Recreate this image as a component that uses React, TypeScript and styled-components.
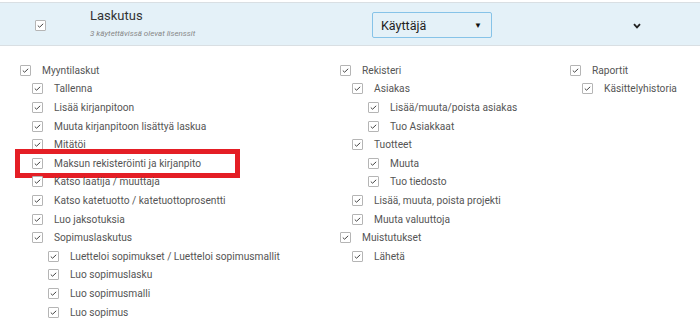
import React from "react";
import styled, { createGlobalStyle } from "styled-components";

const GlobalStyle = createGlobalStyle`
  body {
    margin: 0;
    background: #fff;
    font-family: Roboto, "Liberation Sans", Arial, sans-serif;
  }
`;

type Item = { label: string; level: number; marked?: boolean };

const columns: { width: number; items: Item[] }[] = [
  {
    width: 320,
    items: [
      { label: "Myyntilaskut", level: 0 },
      { label: "Tallenna", level: 1 },
      { label: "Lisää kirjanpitoon", level: 1 },
      { label: "Muuta kirjanpitoon lisättyä laskua", level: 1 },
      { label: "Mitätöi", level: 1 },
      { label: "Maksun rekisteröinti ja kirjanpito", level: 1, marked: true },
      { label: "Katso laatija / muuttaja", level: 1 },
      { label: "Katso katetuotto / katetuottoprosentti", level: 1 },
      { label: "Luo jaksotuksia", level: 1 },
      { label: "Sopimuslaskutus", level: 1 },
      { label: "Luetteloi sopimukset / Luetteloi sopimusmallit", level: 2 },
      { label: "Luo sopimuslasku", level: 2 },
      { label: "Luo sopimusmalli", level: 2 },
      { label: "Luo sopimus", level: 2 },
    ],
  },
  {
    width: 230,
    items: [
      { label: "Rekisteri", level: 0 },
      { label: "Asiakas", level: 1 },
      { label: "Lisää/muuta/poista asiakas", level: 2 },
      { label: "Tuo Asiakkaat", level: 2 },
      { label: "Tuotteet", level: 1 },
      { label: "Muuta", level: 2 },
      { label: "Tuo tiedosto", level: 2 },
      { label: "Lisää, muuta, poista projekti", level: 1 },
      { label: "Muuta valuuttoja", level: 1 },
      { label: "Muistutukset", level: 0 },
      { label: "Lähetä", level: 1 },
    ],
  },
  {
    width: 130,
    items: [
      { label: "Raportit", level: 0 },
      { label: "Käsittelyhistoria", level: 1 },
    ],
  },
];

const indents = [0, 12, 28];

const Check = () => (
  <Box>
    <svg width="7" height="5" viewBox="0 0 7 5">
      <path d="M0.8 2.6 L2.6 4.2 L6.2 0.8" fill="none" stroke="#444" strokeWidth="1" />
    </svg>
  </Box>
);

const App = () => {
  return (
    <Page>
      <GlobalStyle />
      <Header>
        <HeadCheck>
          <Check />
        </HeadCheck>
        <TitleBlock>
          <Title>Laskutus</Title>
          <Sub>3 käytettävissä olevat lisenssit</Sub>
        </TitleBlock>
        <Select>
          <span>Käyttäjä</span>
          <Caret>▼</Caret>
        </Select>
        <Chevron>
          <svg width="8" height="6" viewBox="0 0 8 6">
            <path d="M1 1.2 L4 4.4 L7 1.2" fill="none" stroke="#222" strokeWidth="1.8" />
          </svg>
        </Chevron>
      </Header>
      <Body>
        {columns.map((col, i) => (
          <Column key={i} $width={col.width}>
            {col.items.map((it) => (
              <Row key={it.label} $indent={indents[it.level]} $marked={!!it.marked}>
                <Check />
                <Label>{it.label}</Label>
              </Row>
            ))}
          </Column>
        ))}
      </Body>
    </Page>
  );
};

const Page = styled.div`
  width: 700px;
  height: 331px;
  overflow: hidden;
  padding-top: 2px;
  box-sizing: border-box;
`;

const Header = styled.div`
  height: 42px;
  background: #e4f1f8;
  border-top: 1px solid #d9dfe3;
  border-bottom: 1px solid #d9dfe3;
  display: flex;
  align-items: center;
`;

const HeadCheck = styled.div`
  width: 55px;
  padding-left: 35px;
  display: flex;
  align-items: center;
  margin-top: 3px;
`;

const TitleBlock = styled.div`
  width: 282px;
  display: flex;
  flex-direction: column;
  gap: 5px;
  margin-top: -2px;
`;

const Title = styled.div`
  font-size: 13px;
  color: #333;
  line-height: 16px;
`;

const Sub = styled.div`
  font-size: 8px;
  font-style: italic;
  color: #888;
  line-height: 10px;
`;

const Select = styled.div`
  width: 120px;
  height: 26px;
  box-sizing: border-box;
  border: 1px solid #86c3e8;
  border-radius: 2px;
  display: flex;
  align-items: center;
  justify-content: space-between;
  padding: 0 9px 0 8px;
  font-size: 12.5px;
  color: #222;
  margin-top: 2px;
`;

const Caret = styled.span`
  font-size: 8px;
  color: #111;
`;

const Chevron = styled.div`
  margin-left: 141px;
  display: flex;
  align-items: center;
  margin-top: 3px;
`;

const Body = styled.div`
  display: flex;
  padding: 15px 0 0 20px;
`;

const Column = styled.div<{ $width: number }>`
  width: ${(p) => p.$width}px;
  display: flex;
  flex-direction: column;
`;

const Row = styled.div<{ $indent: number; $marked: boolean }>`
  position: relative;
  height: 18.6px;
  display: flex;
  align-items: center;
  gap: 11px;
  padding-left: ${(p) => p.$indent}px;
  ${(p) =>
    p.$marked &&
    `
    &::after {
      content: "";
      position: absolute;
      left: -5px;
      right: 100px;
      top: -5px;
      bottom: -5px;
      border: 5px solid #e41e25;
    }
  `}
`;

const Box = styled.span`
  width: 11px;
  height: 11px;
  box-sizing: border-box;
  border: 1px solid #b5b5b5;
  border-radius: 1px;
  background: #fff;
  display: inline-flex;
  align-items: center;
  justify-content: center;
  flex-shrink: 0;
`;

const Label = styled.span`
  font-size: 10.2px;
  color: #555;
  white-space: nowrap;
`;

export default App;
